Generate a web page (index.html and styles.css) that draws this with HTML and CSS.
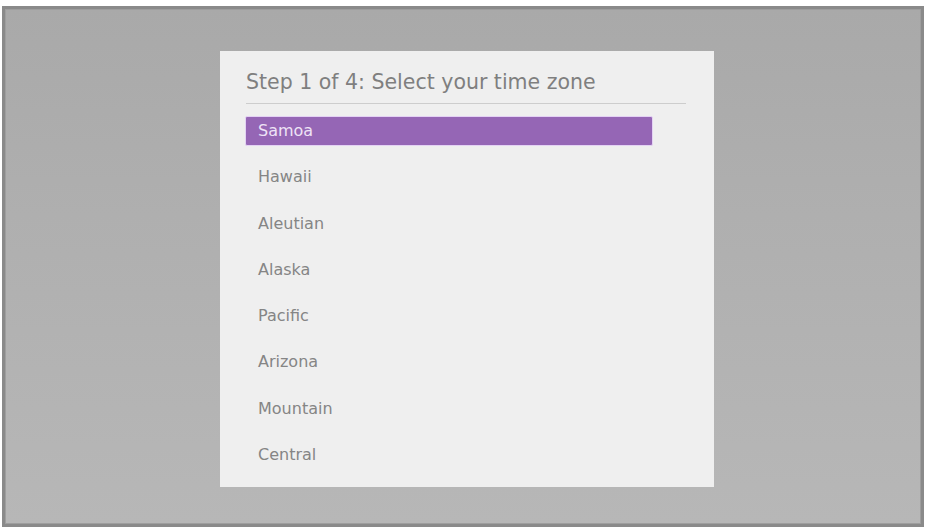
FILE: index.html
```html
<!DOCTYPE html>
<html lang="en">
<head>
<meta charset="utf-8">
<title>Step 1 of 4: Select your time zone</title>
<link rel="stylesheet" href="styles.css">
</head>
<body>
<div class="screen">
  <div class="panel">
    <h1 class="title">Step 1 of 4: Select your time zone</h1>
    <div class="divider"></div>
    <ul class="zones">
      <li class="zone selected">Samoa</li>
      <li class="zone">Hawaii</li>
      <li class="zone">Aleutian</li>
      <li class="zone">Alaska</li>
      <li class="zone">Pacific</li>
      <li class="zone">Arizona</li>
      <li class="zone">Mountain</li>
      <li class="zone">Central</li>
    </ul>
  </div>
</div>
</body>
</html>
```

FILE: styles.css
```css
html, body {
  margin: 0;
  padding: 0;
  background: #ffffff;
}

body {
  width: 928px;
  height: 529px;
  overflow: hidden;
  font-family: "DejaVu Sans", "Open Sans", sans-serif;
}

.screen {
  box-sizing: border-box;
  width: 922px;
  height: 521px;
  margin: 6px 4px 2px 2px;
  border: 3px solid #8a8a8a;
  background: linear-gradient(to bottom, #a9a9a9 0%, #afafaf 40%, #b7b7b7 100%);
  box-shadow: inset 0 0 0 1px #9e9e9e;
  padding: 42px 0 0 215px;
  display: flex;
  align-items: flex-start;
}

.panel {
  box-sizing: border-box;
  width: 494px;
  height: 436px;
  background: #efefef;
  padding: 19px 0 0 26px;
  display: flex;
  flex-direction: column;
}

.title {
  margin: 0;
  font-size: 20.5px;
  line-height: 24px;
  font-weight: normal;
  color: #7f7f7f;
  white-space: nowrap;
}

.divider {
  width: 440px;
  height: 1px;
  margin-top: 9px;
  background: #cdcdcd;
}

.zones {
  list-style: none;
  margin: 12px 0 0 -1px;
  padding: 0;
  display: flex;
  flex-direction: column;
  gap: 16.3px;
}

.zone {
  box-sizing: border-box;
  height: 30px;
  line-height: 28px;
  padding-left: 12px;
  font-size: 16px;
  color: #858585;
  border: 1px solid transparent;
}

.zone.selected {
  width: 408px;
  background: #9566b5;
  border-color: #e4d2f4;
  border-radius: 2px;
  color: #eee3f6;
}
```
